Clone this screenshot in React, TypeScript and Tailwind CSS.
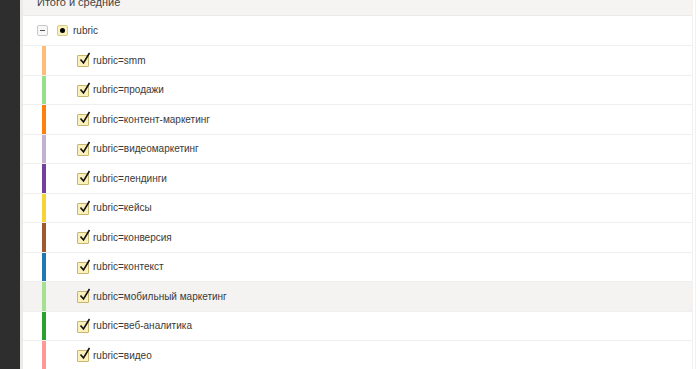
import React from "react"

const rows = [
  { label: "rubric=smm", color: "#ffbb78" },
  { label: "rubric=продажи", color: "#98df8a" },
  { label: "rubric=контент-маркетинг", color: "#ff7f0e" },
  { label: "rubric=видеомаркетинг", color: "#c5b0d5" },
  { label: "rubric=лендинги", color: "#7440a0" },
  { label: "rubric=кейсы", color: "#f7d335" },
  { label: "rubric=конверсия", color: "#a0582c" },
  { label: "rubric=контекст", color: "#1f77b4" },
  { label: "rubric=мобильный маркетинг", color: "#a6e091", hover: true },
  { label: "rubric=веб-аналитика", color: "#2ca02c" },
  { label: "rubric=видео", color: "#ff9896" },
  { label: "", color: "#ff9896" },
]

function Check() {
  return (
    <span className="relative inline-block w-[12px] h-[12px] border border-[#c9b66e] bg-[#fbf1bd] rounded-[1px] mt-[2px]">
      <svg className="absolute left-[1px] top-[-4px]" width="12" height="13" viewBox="0 0 12 13">
        <path d="M1.5 7.5 L4.5 11 L10.5 1" fill="none" stroke="#111" strokeWidth="1.6" />
      </svg>
    </span>
  )
}

export default function App() {
  return (
    <div className="w-[700px] h-[369px] overflow-hidden flex bg-white text-[10px] text-[#3a3a3a]" style={{ fontFamily: "'Liberation Sans', Arial, sans-serif" }}>
      <div className="w-[20px] shrink-0 bg-[#2e2e2e]" />
      <div className="w-[3px] shrink-0 bg-[#eceae6]" />
      <div className="flex-1 flex flex-col">
        <div className="h-[16px] shrink-0 bg-[#f5f4f2] border-b border-[#ebeae7] flex items-end pl-[14px] pr-[8px]">
          <span className="text-[11px] leading-[11px] mb-[7px] text-[#444]">Итого и средние</span>
        </div>
        <div className="h-[30px] shrink-0 border-b border-[#efefef] flex items-center">
          <span className="ml-[14px] w-[11px] h-[11px] border border-[#c8c8c8] rounded-[2px] bg-[#f8f8f8] flex items-center justify-center">
            <span className="w-[5px] h-px bg-[#555]" />
          </span>
          <span className="ml-[9px] w-[11px] h-[11px] border border-[#d9c98a] rounded-[2px] bg-[#fbf1bd] flex items-center justify-center">
            <span className="w-[5px] h-[5px] rounded-full bg-black" />
          </span>
          <span className="ml-[5px]">rubric</span>
        </div>
        {rows.map((r, i) => (
          <div
            key={i}
            className={`h-[29.5px] shrink-0 border-b border-[#efefef] flex items-stretch ${r.hover ? "bg-[#f4f3f1]" : ""}`}
          >
            <span className="ml-[19px] w-[4px] shrink-0" style={{ backgroundColor: r.color }} />
            {r.label && (
              <div className="flex items-center ml-[31px]">
                <Check />
                <span className="ml-[4px]">{r.label}</span>
              </div>
            )}
          </div>
        ))}
      </div>
      <div className="w-[8px] shrink-0 flex">
        <div className="w-px bg-[#f2f1ef]" />
        <div className="w-[2px]" />
        <div className="w-px bg-[#f2f1ef]" />
      </div>
    </div>
  )
}
